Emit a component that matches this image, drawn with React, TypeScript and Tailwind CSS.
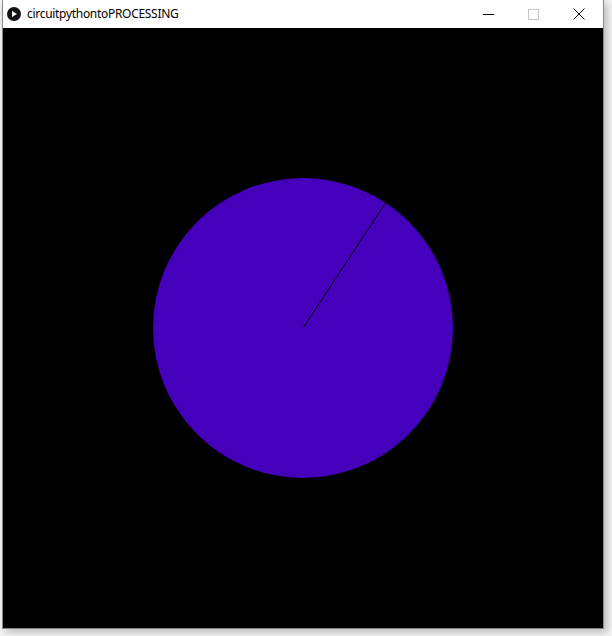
import React from 'react';

export default function App() {
  return (
    <div className="w-[612px] h-[636px] bg-[#f4f4f4] pl-[2px] overflow-hidden" style={{ fontFamily: '"Segoe UI", "Noto Sans", "Liberation Sans", sans-serif' }}>
      <div className="w-[602px] h-[629px] border border-t-0 border-[#8a8a8a] bg-white flex flex-col shadow-[3px_3px_8px_rgba(0,0,0,0.25)]">
        {/* title bar */}
        <div className="h-[28px] flex items-center bg-white">
          <div className="w-[14px] h-[14px] ml-[4px] rounded-full bg-[#111] flex items-center justify-center">
            <svg width="8" height="8" viewBox="0 0 8 8">
              <path d="M2 1 L7 4 L2 7 Z" fill="#fff" />
            </svg>
          </div>
          <span className="ml-[6px] text-[12px] tracking-[-0.3px] text-black leading-none">circuitpythontoPROCESSING</span>
          <div className="ml-auto flex items-center h-full">
            <div className="w-[45px] h-full flex items-center justify-center">
              <svg width="11" height="11" viewBox="0 0 11 11">
                <path d="M0 5.5 H11" stroke="#000" strokeWidth="1" />
              </svg>
            </div>
            <div className="w-[45px] h-full flex items-center justify-center">
              <svg width="11" height="11" viewBox="0 0 11 11">
                <rect x="0.5" y="0.5" width="10" height="10" fill="none" stroke="#c4c4c4" strokeWidth="1" />
              </svg>
            </div>
            <div className="w-[45px] h-full flex items-center justify-center mr-[2px]">
              <svg width="12" height="12" viewBox="0 0 12 12">
                <path d="M0.5 0.5 L11.5 11.5 M11.5 0.5 L0.5 11.5" stroke="#000" strokeWidth="1" />
              </svg>
            </div>
          </div>
        </div>
        {/* sketch canvas */}
        <div className="w-[600px] h-[600px] bg-black">
          <svg width="600" height="600" viewBox="0 0 600 600">
            <circle cx="300" cy="300" r="150" fill="#4400bb" />
            <line x1="300" y1="300" x2="382.5" y2="175" stroke="#000" strokeWidth="1" />
          </svg>
        </div>
      </div>
    </div>
  );
}
